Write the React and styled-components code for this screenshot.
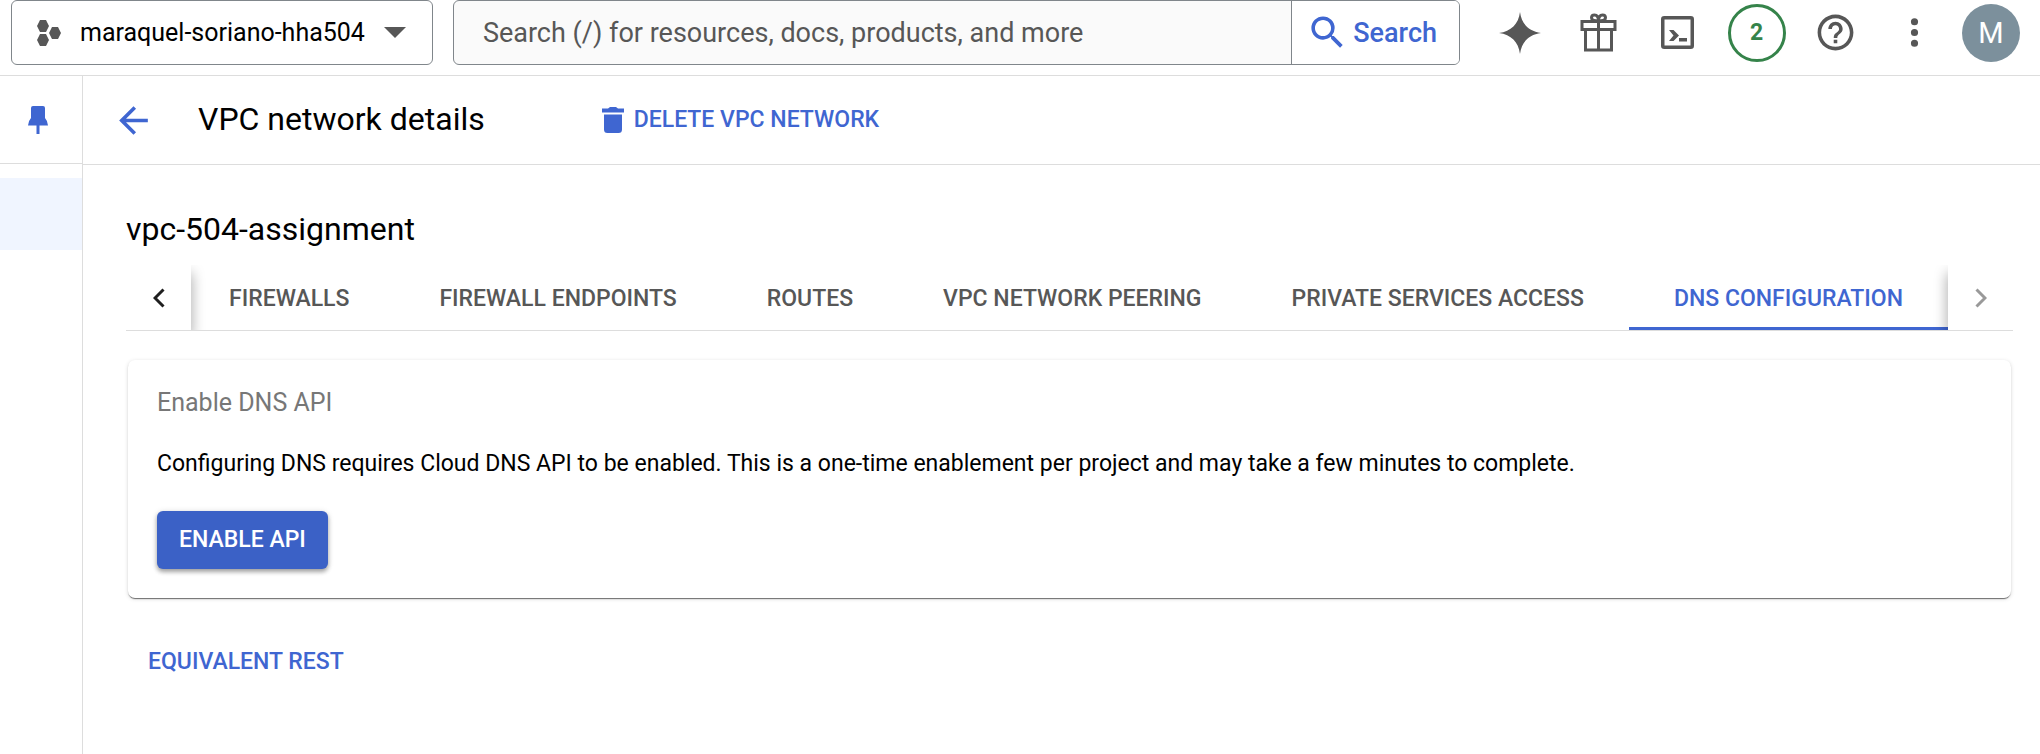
import React from "react";
import styled, { createGlobalStyle } from "styled-components";

const blue = "#3f66d1";
const grey = "#575757";
const line = "#dddddd";

const GlobalStyle = createGlobalStyle`
  *, *::before, *::after { box-sizing: border-box; }
  body { margin: 0; background: #fff; color: #000; font-family: Roboto, "Liberation Sans", sans-serif; font-size: 23px; line-height: 32px; }
  button, input { font: inherit; color: inherit; margin: 0; padding: 0; border: 0; background: none; }
  button { cursor: pointer; }
  svg { display: block; flex: none; }
  h1, h2, h3, p { margin: 0; font-weight: 400; }
`;

const Page = styled.div`
  min-height: 100vh;
  display: flex;
  flex-direction: column;
`;

const Header = styled.header`
  display: flex;
  align-items: flex-start;
  padding: 0 20px 10px 11px;
  border-bottom: 1px solid ${line};
`;

const ProjectPicker = styled.button`
  display: flex;
  align-items: center;
  height: 65px;
  padding: 0 26px 0 25px;
  border: 1px solid #80868b;
  border-radius: 6px;
  font-size: 25px;
  white-space: nowrap;
  svg { color: ${grey}; }
  svg:first-child { margin-right: 19px; }
  svg:last-child { margin-left: 19px; }
`;

const SearchBox = styled.form`
  display: flex;
  flex: 1;
  height: 65px;
  margin: 0 20px;
  border: 1px solid #80868b;
  border-radius: 6px;
  background: #fafafa;
  overflow: hidden;
`;

const SearchInput = styled.input`
  flex: 1;
  min-width: 0;
  padding: 0 29px;
  font-size: 27px;
  outline: none;
  &::placeholder { color: ${grey}; opacity: 1; }
`;

const SearchButton = styled.button`
  display: flex;
  align-items: center;
  gap: 4px;
  padding: 0 22px 0 14px;
  border-left: 1px solid #80868b;
  background: #fff;
  color: ${blue};
  font-size: 27px;
  font-weight: 500;
`;

const IconButton = styled.button`
  display: flex;
  align-items: center;
  justify-content: center;
  width: 79px;
  height: 65px;
  color: ${grey};
`;

const Count = styled.span`
  display: flex;
  align-items: center;
  justify-content: center;
  width: 58px;
  height: 58px;
  border: 3px solid #35834a;
  border-radius: 50%;
  color: #35834a;
  font-weight: 700;
`;

const Avatar = styled.button`
  width: 58px;
  height: 58px;
  margin: 4px 0 0 8px;
  border-radius: 50%;
  background: #7c909c;
  color: #fff;
  font-size: 29px;
`;

const Body = styled.div`
  display: flex;
  flex: 1;
`;

const Sidebar = styled.nav`
  width: 83px;
  flex: none;
  border-right: 1px solid ${line};
`;

const PinButton = styled.button`
  display: flex;
  align-items: center;
  justify-content: center;
  width: 100%;
  height: 88px;
  padding-right: 6px;
  border-bottom: 1px solid ${line};
  color: ${blue};
`;

const ActiveItem = styled.div`
  height: 72px;
  margin-top: 14px;
  background: #f0f5ff;
`;

const Main = styled.main`
  flex: 1;
  min-width: 0;
`;

const Toolbar = styled.div`
  display: flex;
  align-items: center;
  height: 89px;
  padding-left: 29px;
  border-bottom: 1px solid ${line};
`;

const BackLink = styled.a`
  color: ${blue};
  margin-right: 43px;
`;

const Title = styled.h1`
  font-size: 32px;
  line-height: 40px;
  padding-bottom: 2px;
`;

const TextButton = styled.button`
  display: flex;
  align-items: center;
  gap: 10px;
  padding: 0 22px;
  height: 58px;
  color: ${blue};
  font-weight: 500;
`;

const Actions = styled.div`
  margin-left: 95px;
`;

const Content = styled.div`
  padding: 44px 27px 0 43px;
`;

const Name = styled.h2`
  font-size: 32px;
  line-height: 40px;
  margin-bottom: 16px;
`;

const TabBar = styled.div`
  display: flex;
  height: 66px;
  border-bottom: 1px solid ${line};
`;

const Pager = styled.button`
  display: flex;
  align-items: center;
  justify-content: center;
  width: 65px;
  flex: none;
  color: ${(p) => (p.disabled ? "#999999" : "#1f1f1f")};
`;

const TabList = styled.div`
  position: relative;
  display: flex;
  flex: 1;
  min-width: 0;
  justify-content: flex-end;
  overflow: hidden;
  &::before, &::after {
    content: "";
    position: absolute;
    top: 0;
    bottom: 0;
    width: 10px;
    pointer-events: none;
    box-shadow: 0 8px 14px rgba(0, 0, 0, 0.4);
  }
  &::before { left: -10px; }
  &::after { right: -10px; }
`;

const Tab = styled.button`
  flex: none;
  padding: 5px 45px 0;
  border-bottom: 3px solid ${(p) => (p.$active ? blue : "transparent")};
  color: ${(p) => (p.$active ? blue : grey)};
  font-weight: 500;
  white-space: nowrap;
`;

const Card = styled.section`
  margin: 29px 2px 0;
  padding: 27px 29px 29px;
  border-radius: 7px;
  background: #fff;
  box-shadow: 0 2px 1px -1px rgba(0, 0, 0, 0.4), 0 1px 1px rgba(0, 0, 0, 0.2), 0 1px 4px rgba(0, 0, 0, 0.14);
`;

const CardTitle = styled.h3`
  color: #777777;
  font-size: 25px;
  margin-bottom: 29px;
`;

const CardText = styled.p`
  margin-bottom: 31px;
`;

const PrimaryButton = styled.button`
  height: 58px;
  padding: 0 22px;
  border-radius: 6px;
  background: #3b61c6;
  color: #fff;
  font-weight: 500;
  box-shadow: 0 3px 4px rgba(0, 0, 0, 0.3), 0 1px 6px rgba(0, 0, 0, 0.15);
`;

const Footer = styled.div`
  margin-top: 35px;
`;

const Icon = ({ d, size = 43, box = "0 0 24 24", height }) => (
  <svg width={size} height={height || size} viewBox={box} fill="currentColor" aria-hidden="true">
    <path d={d} />
  </svg>
);

const tabs = [
  "FIREWALLS",
  "FIREWALL ENDPOINTS",
  "ROUTES",
  "VPC NETWORK PEERING",
  "PRIVATE SERVICES ACCESS",
  "DNS CONFIGURATION",
];

export default function App() {
  return (
    <Page>
      <GlobalStyle />
      <Header>
        <ProjectPicker type="button">
          <Icon
            size={24}
            height={26}
            box="0 0 24 26"
            d="M3 0H9L12 6L9 12H3L0 6ZM15 7H21L24 13L21 19H15L12 13ZM3 14H9L12 20L9 26H3L0 20Z"
          />
          maraquel-soriano-hha504
          <Icon size={22} height={11} box="0 0 22 11" d="M0 0H22L11 11Z" />
        </ProjectPicker>
        <SearchBox role="search" onSubmit={(e) => e.preventDefault()}>
          <SearchInput
            type="text"
            aria-label="Search"
            placeholder="Search (/) for resources, docs, products, and more"
          />
          <SearchButton type="submit">
            <Icon d="M15.5 14h-.79l-.28-.27A6.47 6.47 0 0 0 16 9.5 6.5 6.5 0 1 0 9.5 16c1.61 0 3.09-.59 4.23-1.57l.27.28v.79l5 4.99L20.49 19l-4.99-5zm-6 0C7.01 14 5 11.99 5 9.5S7.01 5 9.5 5 14 7.01 14 9.5 11.99 14 9.5 14z" />
            Search
          </SearchButton>
        </SearchBox>
        <IconButton type="button" aria-label="Gemini">
          <Icon size={42} box="0 0 42 42" d="M21 0C22.500 12 30 19.500 42 21C30 22.500 22.500 30 21 42C19.500 30 12 22.500 0 21C12 19.500 19.500 12 21 0Z" />
        </IconButton>
        <IconButton type="button" aria-label="Offers">
          <svg width="37" height="39" viewBox="0 0 37 39" fill="none" stroke="currentColor" strokeWidth="3" aria-hidden="true">
            <path d="M2 8.500H35V16.500H2ZM5.500 16.500V37H31.500V16.500M18.500 8.500V37" />
            <path d="M18.500 8C16 8 11.500 7.500 11.500 4.800C11.500 2.800 13 2 14.500 2C17 2 18.500 4.500 18.500 8C18.500 4.500 20 2 22.500 2C24 2 25.500 2.800 25.500 4.800C25.500 7.500 21 8 18.500 8Z" />
          </svg>
        </IconButton>
        <IconButton type="button" aria-label="Cloud Shell">
          <svg width="33" height="33" viewBox="0 0 33 33" aria-hidden="true">
            <rect x="1.750" y="1.750" width="29.500" height="29.500" rx="1.500" fill="none" stroke="currentColor" strokeWidth="3.500" />
            <path d="M8 14H12.500L18 19.500L12.500 25H8L12.500 19.500ZM18 22H26V25.500H18Z" fill="currentColor" />
          </svg>
        </IconButton>
        <IconButton type="button" aria-label="Notifications">
          <Count>2</Count>
        </IconButton>
        <IconButton type="button" aria-label="Help">
          <Icon d="M11 18h2v-2h-2v2zm1-16C6.480 2 2 6.480 2 12s4.480 10 10 10 10-4.480 10-10S17.520 2 12 2zm0 18c-4.410 0-8-3.590-8-8s3.590-8 8-8 8 3.590 8 8-3.590 8-8 8zm0-14c-2.210 0-4 1.790-4 4h2c0-1.100.9-2 2-2s2 .9 2 2c0 2-3 1.750-3 5h2c0-2.250 3-2.500 3-5 0-2.210-1.790-4-4-4z" />
        </IconButton>
        <IconButton type="button" aria-label="More options">
          <Icon d="M12 8a2 2 0 1 0 0-4 2 2 0 0 0 0 4zm0 2a2 2 0 1 0 0 4 2 2 0 0 0 0-4zm0 6a2 2 0 1 0 0 4 2 2 0 0 0 0-4z" />
        </IconButton>
        <Avatar type="button" aria-label="Account">M</Avatar>
      </Header>
      <Body>
        <Sidebar>
          <PinButton type="button" aria-label="Unpin product">
            <Icon size={20} height={28} box="0 0 20 28" d="M5 0H15Q17 0 17 2V12Q19.500 14.500 20 19.500H11.500V28H8.500V19.500H0Q.5 14.500 3 12V2Q3 0 5 0Z" />
          </PinButton>
          <ActiveItem />
        </Sidebar>
        <Main>
          <Toolbar>
            <BackLink href="#" aria-label="Back">
              <Icon d="M20 11H7.830l5.590-5.590L12 4l-8 8 8 8 1.410-1.410L7.830 13H20v-2z" />
            </BackLink>
            <Title>VPC network details</Title>
            <Actions>
              <TextButton type="button">
                <Icon size={22} height={26} box="0 0 22 26" d="M6 1.500L8 0H14L16 1.500H22V5.500H0V1.500ZM2 7.500H20V22.500Q20 26 16.500 26H5.500Q2 26 2 22.500Z" />
                DELETE VPC NETWORK
              </TextButton>
            </Actions>
          </Toolbar>
          <Content>
            <Name>vpc-504-assignment</Name>
            <TabBar>
              <Pager type="button" aria-label="Previous tabs">
                <svg width="12" height="20" viewBox="0 0 12 20" fill="none" stroke="currentColor" strokeWidth="3" aria-hidden="true">
                  <path d="M10.500 1.500L2 10L10.500 18.500" />
                </svg>
              </Pager>
              <TabList role="tablist">
                {tabs.map((t) => (
                  <Tab key={t} type="button" role="tab" aria-selected={t === "DNS CONFIGURATION"} $active={t === "DNS CONFIGURATION"}>
                    {t}
                  </Tab>
                ))}
              </TabList>
              <Pager type="button" aria-label="Next tabs" disabled>
                <svg width="12" height="20" viewBox="0 0 12 20" fill="none" stroke="currentColor" strokeWidth="3" aria-hidden="true">
                  <path d="M1.500 1.500L10 10L1.500 18.500" />
                </svg>
              </Pager>
            </TabBar>
            <Card>
              <CardTitle>Enable DNS API</CardTitle>
              <CardText>
                Configuring DNS requires Cloud DNS API to be enabled. This is a one-time enablement per project and may take a few minutes to complete.
              </CardText>
              <PrimaryButton type="button">ENABLE API</PrimaryButton>
            </Card>
            <Footer>
              <TextButton type="button">EQUIVALENT REST</TextButton>
            </Footer>
          </Content>
        </Main>
      </Body>
    </Page>
  );
}
